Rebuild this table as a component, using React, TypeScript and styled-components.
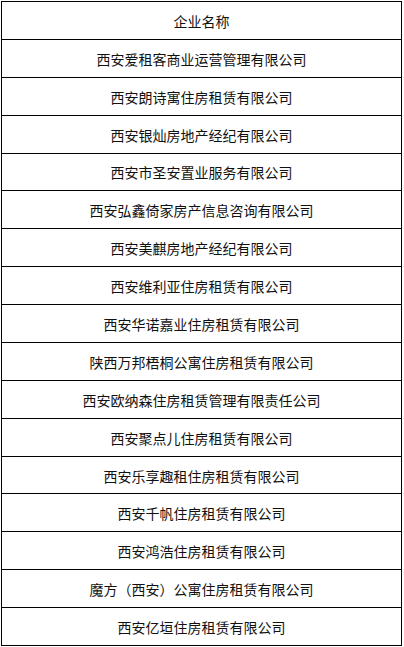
import React from "react";
import styled, { createGlobalStyle } from "styled-components";

const GlobalStyle = createGlobalStyle`
  html, body {
    margin: 0;
    padding: 0;
    background: #ffffff;
  }
  body {
    font-family: "Noto Sans CJK SC", "Noto Sans", sans-serif;
    color: #000000;
  }
`;

const Page = styled.div`
  padding: 1px 0 0 1px;
`;

const Table = styled.div`
  box-sizing: border-box;
  width: 401px;
  height: 645px;
  display: grid;
  grid-template-rows: repeat(17, 1fr);
  border-top: 1px solid #000;
  border-left: 1px solid #000;
`;

const Cell = styled.div`
  box-sizing: border-box;
  display: flex;
  align-items: center;
  justify-content: center;
  padding-top: 1px;
  border-right: 1px solid #000;
  border-bottom: 1px solid #000;
  font-size: 14px;
  line-height: 1;
  color: #111;
  white-space: nowrap;
`;

const companies = [
  "西安爱租客商业运营管理有限公司",
  "西安朗诗寓住房租赁有限公司",
  "西安银灿房地产经纪有限公司",
  "西安市圣安置业服务有限公司",
  "西安弘鑫倚家房产信息咨询有限公司",
  "西安美麒房地产经纪有限公司",
  "西安维利亚住房租赁有限公司",
  "西安华诺嘉业住房租赁有限公司",
  "陕西万邦梧桐公寓住房租赁有限公司",
  "西安欧纳森住房租赁管理有限责任公司",
  "西安聚点儿住房租赁有限公司",
  "西安乐享趣租住房租赁有限公司",
  "西安千帆住房租赁有限公司",
  "西安鸿浩住房租赁有限公司",
  "魔方（西安）公寓住房租赁有限公司",
  "西安亿垣住房租赁有限公司",
];

export default function App() {
  return (
    <>
      <GlobalStyle />
      <Page>
        <Table>
          <Cell>企业名称</Cell>
          {companies.map((c) => (
            <Cell key={c}>{c}</Cell>
          ))}
        </Table>
      </Page>
    </>
  );
}
